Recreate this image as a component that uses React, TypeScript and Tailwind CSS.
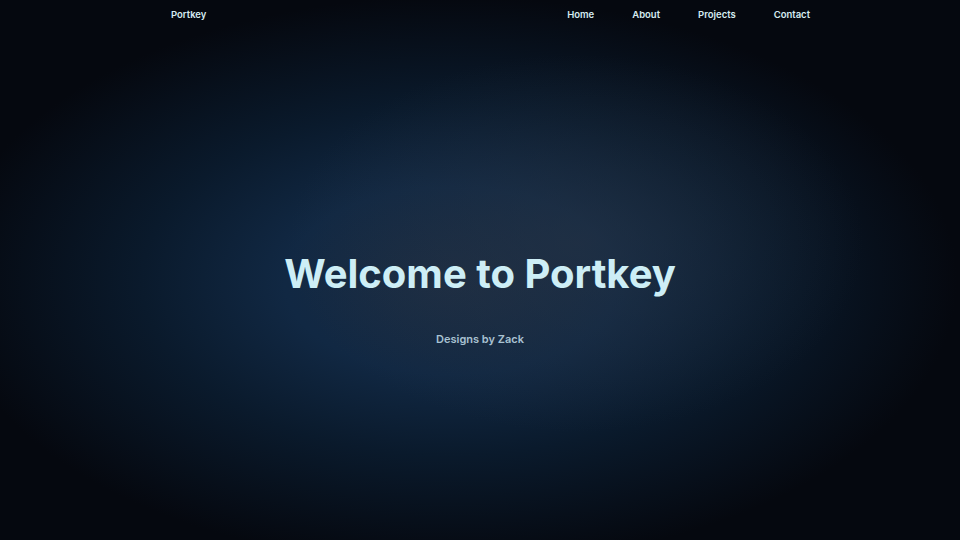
export default function App() {
  return (
    <main
      className="w-full h-[540px] overflow-hidden flex flex-col relative bg-[#05070d] bg-[radial-gradient(ellipse_30%_35%_at_60%_45%,rgba(40,52,68,0.55)_0%,rgba(40,52,68,0)_100%),radial-gradient(ellipse_62%_62%_at_47%_52%,#1b2c42_0%,#112843_28%,#0a1a2c_52%,#05080f_85%)]"
      style={{ fontFamily: "Inter, 'Noto Sans', sans-serif" }}
    >
      <nav className="flex items-center justify-between pl-[171px] pr-[150px] h-[30px] text-[9.5px] font-semibold text-[#d6ecf2]">
        <span>Portkey</span>
        <div className="flex items-center gap-[38px]">
          <a>Home</a>
          <a>About</a>
          <a>Projects</a>
          <a>Contact</a>
        </div>
      </nav>

      <section className="flex-1 flex flex-col items-center pt-[224px]">
        <h1 className="text-[40px] leading-none font-bold text-[#cdeef6]">
          Welcome to Portkey
        </h1>
        <p className="mt-[37px] text-[11px] font-semibold text-[#a9c2d2]">
          Designs by Zack
        </p>
      </section>
    </main>
  );
}
